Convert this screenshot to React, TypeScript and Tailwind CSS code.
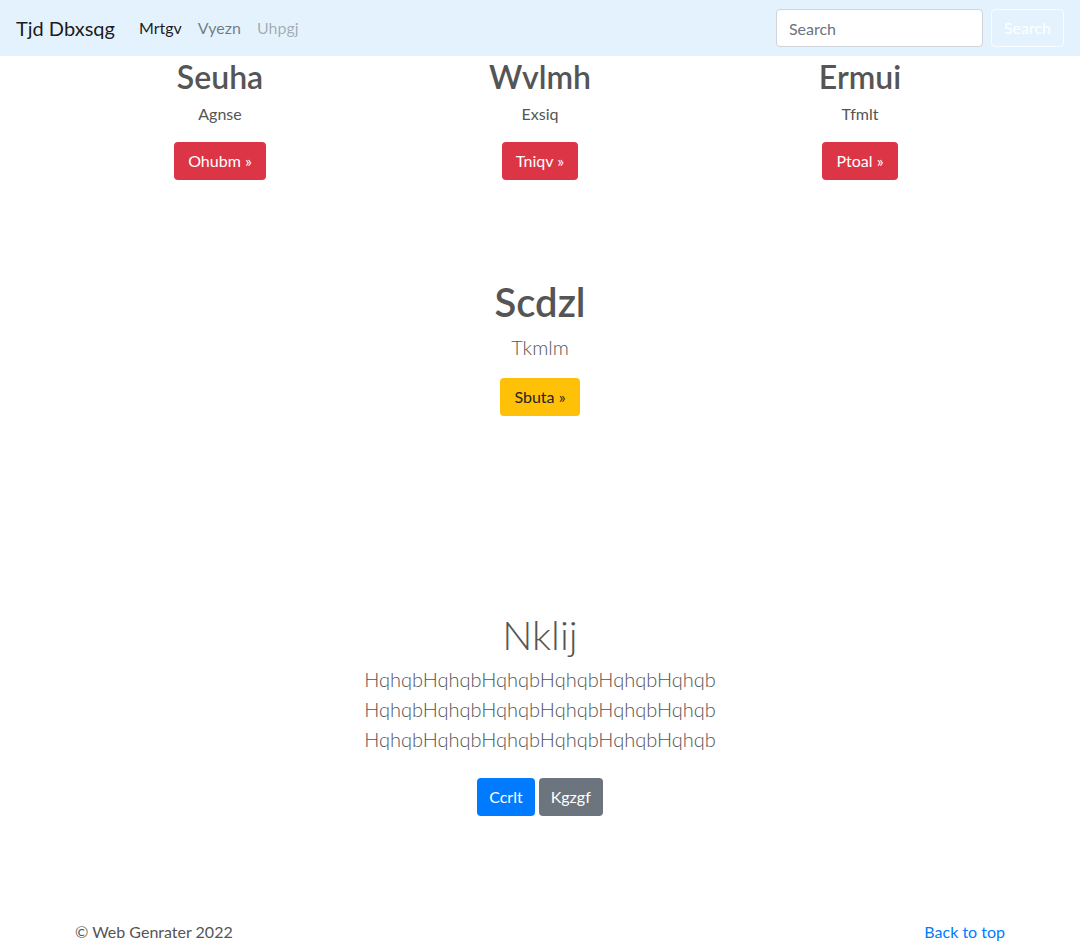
import React from 'react';

const font = { fontFamily: 'Lato, "Noto Sans", sans-serif' };

function Feature({ title, text, label }: { title: string; text: string; label: string }) {
    return (
        <div className="flex flex-col items-center px-[15px]">
            <h2 className="text-[32px] leading-[38px] font-semibold text-[#555] mb-[6px]">{title}</h2>
            <p className="text-base leading-6 text-[#555] mb-4">{text}</p>
            <button className="bg-[#dc3545] text-white text-base leading-6 px-[14px] py-[7px] rounded">{label} »</button>
        </div>
    );
}

export default function App() {
    return (
        <div className="min-h-[944px] bg-white flex flex-col" style={font}>
            <nav className="h-14 bg-[#e3f2fd] flex items-center px-4">
                <a className="text-xl text-black/90 mr-6">Tjd Dbxsqg</a>
                <ul className="flex items-center gap-4 text-base">
                    <li className="text-black/90">Mrtgv</li>
                    <li className="text-black/50">Vyezn</li>
                    <li className="text-black/30">Uhpgj</li>
                </ul>
                <div className="ml-auto flex items-center gap-2">
                    <input
                        placeholder="Search"
                        className="w-[207px] h-[38px] bg-white border border-[#ced4da] rounded px-3 text-base placeholder:text-[#6c757d]"
                    />
                    <button className="h-[38px] px-3 border border-white/80 rounded text-white text-base">Search</button>
                </div>
            </nav>

            <main className="flex flex-col items-center">
                <section className="w-[960px] grid grid-cols-3 pt-[2px]">
                    <Feature title="Seuha" text="Agnse" label="Ohubm" />
                    <Feature title="Wvlmh" text="Exsiq" label="Tniqv" />
                    <Feature title="Ermui" text="Tfmlt" label="Ptoal" />
                </section>

                <section className="flex flex-col items-center mt-[98px]">
                    <h1 className="text-[40px] leading-[48px] font-semibold text-[#555] mb-[6px]">Scdzl</h1>
                    <p className="text-xl leading-[30px] font-light text-[#555] mb-4">Tkmlm</p>
                    <button className="bg-[#ffc107] text-[#212529] text-base leading-6 px-[14px] py-[7px] rounded">Sbuta »</button>
                </section>

                <section className="flex flex-col items-center mt-[190px]">
                    <h1 className="text-[40px] leading-[58px] font-light text-[#555]">Nklij</h1>
                    <div className="text-xl leading-[30px] font-light text-[#555] text-center mb-[24px]">
                        <p>HqhqbHqhqbHqhqbHqhqbHqhqbHqhqb</p>
                        <p>HqhqbHqhqbHqhqbHqhqbHqhqbHqhqb</p>
                        <p>HqhqbHqhqbHqhqbHqhqbHqhqbHqhqb</p>
                    </div>
                    <div className="flex gap-1">
                        <button className="bg-[#007bff] text-white text-base leading-6 px-3 py-[7px] rounded">Ccrlt</button>
                        <button className="bg-[#6c757d] text-white text-base leading-6 px-3 py-[7px] rounded">Kgzgf</button>
                    </div>
                </section>
            </main>

            <footer className="mt-auto flex justify-center">
                <div className="w-[960px] px-[15px] flex justify-between text-base leading-6">
                    <p className="text-[#555]">© Web Genrater 2022</p>
                    <a className="text-[#007bff]">Back to top</a>
                </div>
            </footer>
        </div>
    );
}
